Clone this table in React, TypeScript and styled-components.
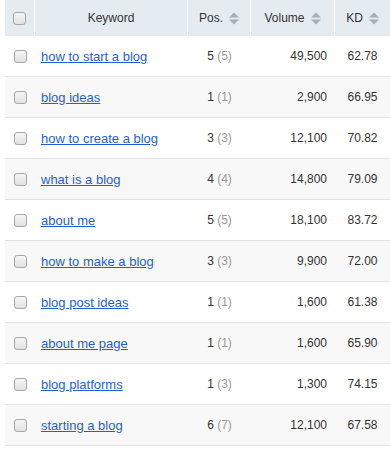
import React from "react";
import styled, { createGlobalStyle } from "styled-components";

const Global = createGlobalStyle`
  html, body { margin: 0; padding: 0; background: #ffffff; }
  body { font-family: "Liberation Sans", Arial, sans-serif; color: #333333; }
`;

const Wrap = styled.div`
  padding-left: 5px;
`;

const Table = styled.div`
  display: grid;
  grid-template-columns: 30px 153px 63px 84px 55px;
  width: 385px;
`;

const HeadCell = styled.div<{ $last?: boolean }>`
  height: 36px;
  background: #e4ebf1;
  border-right: ${(p) => (p.$last ? "none" : "1px solid #ffffff")};
  display: flex;
  align-items: center;
  justify-content: center;
  gap: 6px;
  font-size: 12px;
  color: #333333;
`;

const Cell = styled.div<{ $alt: boolean; $align?: "left" | "center" | "right" }>`
  height: 40px;
  border-bottom: 1px solid #e3e6e9;
  background: ${(p) => (p.$alt ? "#f8f8f8" : "#ffffff")};
  display: flex;
  align-items: center;
  justify-content: ${(p) =>
    p.$align === "right" ? "flex-end" : p.$align === "center" ? "center" : "flex-start"};
  padding: ${(p) => (p.$align === "right" ? "0 8px 0 0" : p.$align === "left" ? "0 0 0 6px" : "0")};
  font-size: 12px;
  color: #333333;
`;

const Check = styled.span`
  display: inline-block;
  width: 11px;
  height: 11px;
  border: 1px solid #a7a7a7;
  border-radius: 3px;
  background: linear-gradient(#f6f6f6, #e1e1e1);
`;

const KeywordLink = styled.a`
  font-size: 13px;
  color: #1f5fd3;
  text-decoration: underline;
  cursor: pointer;
`;

const Prev = styled.span`
  color: #999999;
`;

const SortIcon = () => (
  <svg width="10" height="13" viewBox="0 0 10 13" aria-hidden="true">
    <polygon points="0,5.5 5,0.5 10,5.5" fill="#a6afb7" />
    <polygon points="0,7.5 10,7.5 5,12.5" fill="#a6afb7" />
  </svg>
);

const rows: [string, number, number, string, string][] = [
  ["how to start a blog", 5, 5, "49,500", "62.78"],
  ["blog ideas", 1, 1, "2,900", "66.95"],
  ["how to create a blog", 3, 3, "12,100", "70.82"],
  ["what is a blog", 4, 4, "14,800", "79.09"],
  ["about me", 5, 5, "18,100", "83.72"],
  ["how to make a blog", 3, 3, "9,900", "72.00"],
  ["blog post ideas", 1, 1, "1,600", "61.38"],
  ["about me page", 1, 1, "1,600", "65.90"],
  ["blog platforms", 1, 3, "1,300", "74.15"],
  ["starting a blog", 6, 7, "12,100", "67.58"],
];

export default function App() {
  return (
    <Wrap>
      <Global />
      <Table>
        <HeadCell>
          <Check />
        </HeadCell>
        <HeadCell>Keyword</HeadCell>
        <HeadCell>
          Pos. <SortIcon />
        </HeadCell>
        <HeadCell>
          Volume <SortIcon />
        </HeadCell>
        <HeadCell $last>
          KD <SortIcon />
        </HeadCell>
        {rows.map(([kw, pos, prev, vol, kd], i) => {
          const alt = i % 2 === 1;
          return (
            <React.Fragment key={kw}>
              <Cell $alt={alt} $align="center">
                <Check />
              </Cell>
              <Cell $alt={alt} $align="left">
                <KeywordLink>{kw}</KeywordLink>
              </Cell>
              <Cell $alt={alt} $align="center">
                {pos}&nbsp;<Prev>({prev})</Prev>
              </Cell>
              <Cell $alt={alt} $align="right">
                {vol}
              </Cell>
              <Cell $alt={alt} $align="center">
                {kd}
              </Cell>
            </React.Fragment>
          );
        })}
      </Table>
    </Wrap>
  );
}
